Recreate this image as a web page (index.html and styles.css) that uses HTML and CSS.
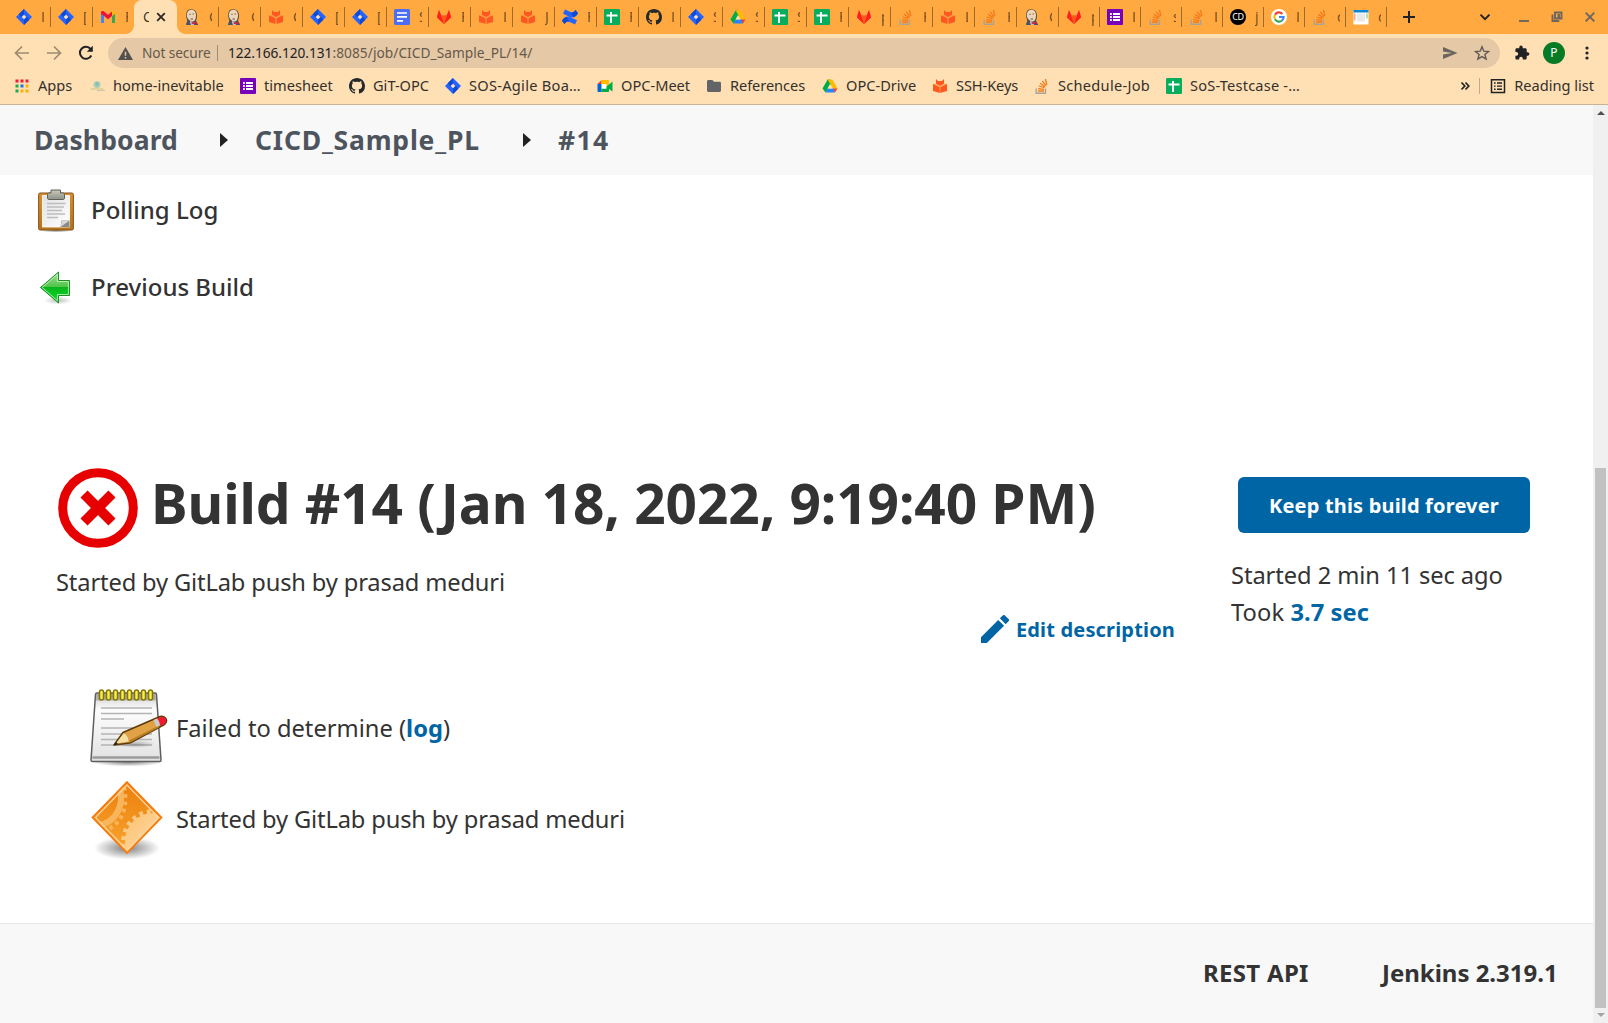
FILE: index.html
```html
<!DOCTYPE html>
<html lang="en">
<head>
<meta charset="utf-8">
<title>CICD_Sample_PL #14 [Jenkins]</title>
<link rel="stylesheet" href="styles.css">
</head>
<body>
<svg class="defs" aria-hidden="true">
  <defs>
    <linearGradient id="gPaper" x1="0" y1="0" x2="1" y2="1"><stop offset="0" stop-color="#e2e2e2"/><stop offset="1" stop-color="#fff"/></linearGradient>
    <linearGradient id="gPad" x1="0" y1="0" x2="0" y2="1"><stop offset="0" stop-color="#cfcfcf"/><stop offset=".25" stop-color="#fdfdfd"/><stop offset="1" stop-color="#e2e2e2"/></linearGradient>
    <linearGradient id="gBoard" x1="0" y1="0" x2="0" y2="1"><stop offset="0" stop-color="#d68f34"/><stop offset="1" stop-color="#b5741d"/></linearGradient>
    <linearGradient id="gClip" x1="0" y1="0" x2="0" y2="1"><stop offset="0" stop-color="#c8cabe"/><stop offset="1" stop-color="#8d9085"/></linearGradient>
    <linearGradient id="gGreen" x1="0" y1="0" x2="0" y2="1"><stop offset="0" stop-color="#a5e09a"/><stop offset=".48" stop-color="#4fc44a"/><stop offset=".5" stop-color="#08b61c"/><stop offset="1" stop-color="#0ae02c"/></linearGradient>
    <linearGradient id="gOrange" x1="0" y1="0" x2="0" y2="1"><stop offset="0" stop-color="#ec7f0c"/><stop offset="1" stop-color="#f9a530"/></linearGradient>
    <linearGradient id="gGear" x1="0" y1="0" x2="1" y2="1"><stop offset="0" stop-color="#fbbf70"/><stop offset=".6" stop-color="#ffdca4"/></linearGradient>
    <radialGradient id="gShadow"><stop offset="0" stop-color="#000" stop-opacity=".5"/><stop offset=".6" stop-color="#000" stop-opacity=".2"/><stop offset="1" stop-color="#000" stop-opacity="0"/></radialGradient>
  </defs>
  <symbol id="jira" viewBox="0 0 16 16"><path fill="#2563ff" d="M8 0l8 8-8 8-8-8z"/><path fill="#0f4bd0" d="M8 0v5.5L5.2 8.2 2.7 5.3zM8 16v-5.5l2.800-2.700 2.500 2.900z"/><path fill="#ffe0b5" d="M8 5.700L10.300 8 8 10.300 5.700 8z"/></symbol>
  <symbol id="gmail" viewBox="0 0 16 16"><path fill="#4285f4" d="M1 14V4l3 2.500V14z"/><path fill="#34a853" d="M12 14V6.500L15 4v10z"/><path fill="#ea1436" d="M1 3.500C1 2 2.800 1.600 4 2.500L8 5.800l4-3.300V7L8 10.200 4 7 1 4.800z"/><path fill="#fbbc04" d="M12 2.500c1.200-.9 3-.5 3 1v1.300L12 7z"/></symbol>
  <symbol id="jenkins" viewBox="0 0 16 16"><path fill="#5a4a40" d="M4.200.8C6.500-.4 11.500-.3 12.600 4c.7 3 .3 6-.8 8l1.500 3H2.500l.8-4C1.700 8.500 1.700 2.600 4.200.8z"/><path fill="#f0d6b7" d="M4.800 1.500C7.300.2 11 .8 11.800 4.400c.6 3-.2 7.700-2.800 8C5.500 12.500 3 9.500 2.900 6.200c-.1-1.700.6-3.900 1.900-4.700z"/><path fill="#d9d5cf" d="M3 4.500L4.500 5v4L3.300 8zM4.800 9.200c1.700-.9 3.500-.9 5-.3L9 10.500H5.800z"/><path fill="#3f5870" d="M1.800 16l1.700-3.700L8 13l4-1.200L14.300 16z"/><path fill="#f6f6f6" d="M6 12.300l3 .7.700 3H7z"/><path fill="#d3233a" d="M7.500 12.700l2.300 1 2.700-1v3l-2.700-1-2.300 1z"/><path stroke="#4a3a30" stroke-width=".8" fill="none" d="M5.300 5.300h1.400M8.500 5h1.400M6.500 10h2.500"/></symbol>
  <symbol id="gitbook" viewBox="0 0 16 16"><path fill="#ff5722" d="M4 1l2 2h4l2-2v4.800L8 8 4 5.800zM1 6l2.500.3L8 8.800l4.500-2.500L15 6v7l-7 2-7-2z"/><path stroke="#ffab45" stroke-width=".9" d="M8 9V15M1 5.700l7 3.300 7-3.300" fill="none"/></symbol>
  <symbol id="docs" viewBox="0 0 16 16"><rect width="16" height="16" rx="1.500" fill="#4c6ef5"/><path stroke="#fff" stroke-width="1.700" d="M3 4h10M3 7.900h10M3 11.800h6"/></symbol>
  <symbol id="gitlab" viewBox="0 0 16 16"><path fill="#fc6d26" d="M1 7L3 1l2.300 5.500h5.400L13 1l2 6-.5 2L8 15 1.500 9z"/><path fill="#ff1f1f" d="M1.500 6.500L3 1l2.300 5.500L8 15 1 8.500zM14.500 6.500L13 1l-2.300 5.500L8 15l7-6.500z"/><path fill="#fc5a16" d="M5 6.500h6L8 15z"/></symbol>
  <symbol id="confluence" viewBox="0 0 16 16"><path fill="#2563ff" d="M0 11.800C3 6.800 6 6.800 10 9l5 2.300-2 4.200c-6-2.800-8-4-10.500-.5zM16 4.200C13 9.200 10 9.200 6 7L1 4.700 3 .5c6 2.800 8 4 10.500.5z"/><path fill="#0f4bd0" d="M0 11.800c1.500-2.500 3-3.700 4.800-3.900L7 12c-2 .2-3.200 1.200-4.500 3zM16 4.200c-1.500 2.500-3 3.700-4.800 3.900L9 4c2-.2 3.200-1.200 4.500-3z"/></symbol>
  <symbol id="sheets" viewBox="0 0 16 16"><rect width="16" height="16" rx="1.200" fill="#06ad5c"/><path stroke="#fff" stroke-width="1.900" d="M2.500 6.500h11M7 3v11"/></symbol>
  <symbol id="github" viewBox="0 0 16 16"><path fill="#24292e" fill-rule="evenodd" d="M8 0C3.580 0 0 3.580 0 8c0 3.540 2.290 6.530 5.470 7.590.4.070.55-.17.55-.38 0-.19-.01-.82-.01-1.490-2.010.37-2.530-.49-2.690-.94-.09-.23-.48-.94-.82-1.130-.28-.15-.68-.52-.01-.53.63-.01 1.080.58 1.230.82.72 1.210 1.870.87 2.330.66.07-.52.28-.87.51-1.070-1.780-.2-3.640-.89-3.640-3.950 0-.87.31-1.590.82-2.150-.08-.2-.36-1.020.08-2.120 0 0 .67-.21 2.200.82.64-.18 1.320-.27 2-.27s1.360.09 2 .27c1.530-1.040 2.200-.82 2.200-.82.44 1.100.16 1.920.08 2.120.51.56.82 1.270.82 2.150 0 3.070-1.870 3.750-3.650 3.950.29.25.54.73.54 1.480 0 1.070-.01 1.930-.01 2.200 0 .21.15.46.55.38A8.010 8.010 0 0 0 16 8c0-4.420-3.580-8-8-8z"/></symbol>
  <symbol id="drive" viewBox="0 0 16 16"><path fill="#00ac47" d="M5.600 1.500H8l2 3.200L3.500 14.500.5 10.500z"/><path fill="#ffba00" d="M5.600 1.500h4.800l5.100 9H11z"/><path fill="#2684fc" d="M3.500 14.500l2.300-4h6.200l1 4z"/><path fill="#ea4335" d="M11 10.500h4.500L13 14.500z"/><path fill="#ffe0b5" d="M8 6l2.600 4.500H5.400z"/></symbol>
  <symbol id="so" viewBox="0 0 16 16"><path fill="none" stroke="#a9a296" stroke-width="1.400" d="M2.200 10.500v4.800h9.300v-4.800"/><path stroke="#f47a18" stroke-width="1.300" d="M4 13h6M4.100 10.600l6 .7M4.700 8l5.800 1.700M6 5.300l5.100 3.300M8.300 2.800l3.700 4.800M11.400 1l1.500 5.800"/></symbol>
  <symbol id="forms" viewBox="0 0 16 16"><rect width="16" height="16" rx="1" fill="#7700bb"/><path stroke="#fff" stroke-width="2" d="M3 5h1.800M6 5h7M3 8h1.800M6 8h7M3 11h1.800M6 11h7"/></symbol>
  <symbol id="google" viewBox="0 0 16 16"><circle cx="8" cy="8" r="8" fill="#fff"/><g fill="none" stroke-width="2.200"><path stroke="#ea4335" d="M4 5.700A4.600 4.600 0 0 1 11.400 4.900"/><path stroke="#fbbc05" d="M4 5.700a4.600 4.600 0 0 0 0 4.600"/><path stroke="#34a853" d="M4 10.300a4.600 4.600 0 0 0 7 1.200"/><path stroke="#4285f4" d="M8 8h4.600a4.600 4.600 0 0 1-1.600 3.500"/></g></symbol>
  <symbol id="sheet2" viewBox="0 0 16 16"><path fill="#fff" d="M.5 1h15v14.500H.5z"/><path fill="#0d86d8" d="M.5 1h15v2.500H.5z"/><path fill="#e8e8e8" d="M4 4.500h8v8H4z"/><path fill="#ffa48a" d="M1 4.500h1.500v7H1z"/><path fill="#8fdc9f" d="M13.200 4.500h1.500v5h-1.500z"/></symbol>
  <symbol id="meet" viewBox="0 0 16 16"><path fill="#fff" d="M4 5.500h6v6H4z"/><path fill="#ea4335" d="M.5 6L4.500 2v4z"/><path fill="#ffba00" d="M4.500 2H11c.7 0 1 .4 1 1v3.500L9.500 9V6h-5z"/><path fill="#0066da" d="M.5 6h4v8H1.700C.9 14 .5 13.600.5 13z"/><path fill="#00ac47" d="M4.500 10.700h5V8.500L15.500 3.500v10L12 11v2c0 .7-.4 1-1 1H4.500z"/></symbol>
  <symbol id="folder" viewBox="0 0 16 16"><path fill="#626468" d="M1 3.500C1 2.700 1.600 2 2.400 2h4L8 3.800h5.600c.8 0 1.400.6 1.400 1.400v7.400c0 .8-.6 1.400-1.400 1.400H2.400C1.600 14 1 13.400 1 12.600z"/></symbol>
  <symbol id="apps" viewBox="0 0 16 16"><path fill="#ea1f36" d="M1.500 1.500h3v3h-3zM6.500 1.500h3v3h-3zM11.500 1.500h3v3h-3z"/><path fill="#1aab4f" d="M1.500 6.500h3v3h-3zM1.500 11.500h3v3h-3z"/><path fill="#1a73e8" d="M6.500 6.500h3v3h-3z"/><path fill="#fbb006" d="M11.500 6.500h3v3h-3zM6.500 11.500h3v3h-3zM11.500 11.500h3v3h-3z"/></symbol>
  <symbol id="inev" viewBox="0 0 16 16"><circle cx="8" cy="6.500" r="3.500" fill="#a9cfae"/><circle cx="8" cy="6" r="1.600" fill="#86b3c4"/><path stroke="#d5ca8e" stroke-width="1.300" d="M1.500 11h13"/><path stroke="#c9c6b2" stroke-width="1" d="M8 12.500h8"/></symbol>
</svg>

<header class="tabstrip">
  <div class="tab"><svg class="ic"><use href="#jira"/></svg><span>I</span></div>
  <div class="tab"><svg class="ic"><use href="#jira"/></svg><span>[</span></div>
  <div class="tab plain"><svg class="ic"><use href="#gmail"/></svg><span>F</span></div>
  <div class="tab active"><span>C</span><svg class="x" viewBox="0 0 10 10"><path d="M1.200 1.200l7.600 7.600M8.800 1.200L1.200 8.800"/></svg></div>
  <div class="tab"><svg class="ic"><use href="#jenkins"/></svg><span>C</span></div>
  <div class="tab"><svg class="ic"><use href="#jenkins"/></svg><span>C</span></div>
  <div class="tab"><svg class="ic"><use href="#gitbook"/></svg><span>C</span></div>
  <div class="tab"><svg class="ic"><use href="#jira"/></svg><span>[</span></div>
  <div class="tab"><svg class="ic"><use href="#jira"/></svg><span>[</span></div>
  <div class="tab"><svg class="ic"><use href="#docs"/></svg><span>S</span></div>
  <div class="tab"><svg class="ic"><use href="#gitlab"/></svg><span>F</span></div>
  <div class="tab"><svg class="ic"><use href="#gitbook"/></svg><span>I</span></div>
  <div class="tab"><svg class="ic"><use href="#gitbook"/></svg><span>J</span></div>
  <div class="tab"><svg class="ic"><use href="#confluence"/></svg><span>F</span></div>
  <div class="tab"><svg class="ic"><use href="#sheets"/></svg><span>F</span></div>
  <div class="tab"><svg class="ic"><use href="#github"/></svg><span>I</span></div>
  <div class="tab"><svg class="ic"><use href="#jira"/></svg><span>S</span></div>
  <div class="tab"><svg class="ic"><use href="#drive"/></svg><span>S</span></div>
  <div class="tab"><svg class="ic"><use href="#sheets"/></svg><span>S</span></div>
  <div class="tab"><svg class="ic"><use href="#sheets"/></svg><span>F</span></div>
  <div class="tab"><svg class="ic"><use href="#gitlab"/></svg><span>p</span></div>
  <div class="tab"><svg class="ic"><use href="#so"/></svg><span>H</span></div>
  <div class="tab"><svg class="ic"><use href="#gitbook"/></svg><span>L</span></div>
  <div class="tab"><svg class="ic"><use href="#so"/></svg><span>H</span></div>
  <div class="tab"><svg class="ic"><use href="#jenkins"/></svg><span>C</span></div>
  <div class="tab slim"><svg class="ic"><use href="#gitlab"/></svg><span>p</span></div>
  <div class="tab slim"><svg class="ic"><use href="#forms"/></svg><span>I</span></div>
  <div class="tab slim"><svg class="ic"><use href="#so"/></svg><span>s</span></div>
  <div class="tab slim"><svg class="ic"><use href="#so"/></svg><span>I</span></div>
  <div class="tab slim"><b class="cd">CD</b><span>j</span></div>
  <div class="tab slim"><svg class="ic"><use href="#google"/></svg><span>I</span></div>
  <div class="tab slim"><svg class="ic"><use href="#so"/></svg><span>c</span></div>
  <div class="tab slim"><svg class="ic"><use href="#sheet2"/></svg><span>c</span></div>
  <svg class="newtab" viewBox="0 0 12 12"><path d="M6 0v12M0 6h12"/></svg>
  <div class="winbtns">
    <svg class="dark" viewBox="0 0 12 12"><path d="M1.500 3.700L6 8.200l4.500-4.500"/></svg>
    <svg viewBox="0 0 12 12"><path d="M1 10h10"/></svg>
    <svg viewBox="0 0 12 12"><path d="M4 1.500h6.500v6H4zM6.500 4h1.500v1.500H6.500M1.500 3.500V10h6.700"/></svg>
    <svg viewBox="0 0 12 12"><path d="M1.700 1.700l8.600 8.600M10.300 1.700l-8.600 8.600"/></svg>
  </div>
</header>

<div class="toolbar">
  <svg class="nav dim" viewBox="0 0 16 16"><path d="M15 8H2M8 1.500L1.500 8 8 14.500"/></svg>
  <svg class="nav dim" viewBox="0 0 16 16"><path d="M1 8h13M8 1.500L14.500 8 8 14.500"/></svg>
  <svg class="nav" viewBox="0 0 16 16"><path d="M13.300 10.500A6 6 0 1 1 12.600 4"/><path class="fill" d="M14.800.8v6h-6z"/></svg>
  <div class="omnibox">
    <svg class="warn" viewBox="0 0 16 16"><path fill="#53514e" d="M8 1l8 14H0z"/><path stroke="#e5c8a5" stroke-width="1.600" d="M8 6v4.500M8 11.700v1.600"/></svg>
    <span class="secure">Not secure</span>
    <span class="host">122.166.120.131</span><span class="path">:8085/job/CICD_Sample_PL/14/</span>
    <svg class="send" viewBox="0 0 16 16"><path fill="#6a655f" d="M1 2l14.500 6L1 14V9.500L10 8 1 6.500z"/></svg>
    <svg class="star" viewBox="0 0 16 16"><path fill="none" stroke="#5f5a55" stroke-width="1.400" d="M8 1.800l1.800 4.400 4.700.3-3.600 3 1.200 4.600L8 11.600l-4.100 2.500 1.200-4.600-3.600-3 4.700-.3z"/></svg>
  </div>
  <svg class="ext" viewBox="0 0 16 16"><path fill="#202124" d="M13.700 7.300h-1V4.600c0-.7-.6-1.300-1.300-1.300H8.700v-1a1.700 1.700 0 0 0-3.400 0v1H2.700c-.7 0-1.300.6-1.300 1.300v2.500h1a1.800 1.800 0 0 1 0 3.600h-1v2.600c0 .7.600 1.300 1.300 1.300h2.500v-1a1.800 1.800 0 0 1 3.600 0v1h2.600c.7 0 1.300-.6 1.300-1.300v-2.600h1a1.700 1.700 0 0 0 0-3.400z"/></svg>
  <span class="avatar">P</span>
  <svg class="more" viewBox="0 0 4 16"><circle cx="2" cy="3" r="1.600"/><circle cx="2" cy="8" r="1.600"/><circle cx="2" cy="13" r="1.600"/></svg>
</div>

<nav class="bookmarks">
  <a><svg class="ic"><use href="#apps"/></svg><span class="b1">Apps</span></a>
  <a><svg class="ic"><use href="#inev"/></svg><span class="b2">home-inevitable</span></a>
  <a><svg class="ic"><use href="#forms"/></svg><span class="b3">timesheet</span></a>
  <a><svg class="ic"><use href="#github"/></svg><span class="b4">GiT-OPC</span></a>
  <a><svg class="ic"><use href="#jira"/></svg><span class="b5">SOS-Agile Boa…</span></a>
  <a><svg class="ic"><use href="#meet"/></svg><span class="b6">OPC-Meet</span></a>
  <a><svg class="ic"><use href="#folder"/></svg><span class="b7">References</span></a>
  <a><svg class="ic"><use href="#drive"/></svg><span class="b8">OPC-Drive</span></a>
  <a><svg class="ic"><use href="#gitbook"/></svg><span class="b9">SSH-Keys</span></a>
  <a><svg class="ic"><use href="#so"/></svg><span class="b10">Schedule-Job</span></a>
  <a><svg class="ic"><use href="#sheets"/></svg><span class="b11">SoS-Testcase -…</span></a>
  <svg class="chev" viewBox="0 0 10 10"><path d="M1.500 1.500L4.800 5 1.500 8.500M5.500 1.500L8.800 5 5.500 8.500"/></svg>
  <a class="reading"><svg class="list" viewBox="0 0 16 16"><path fill="none" stroke="#202124" stroke-width="1.500" d="M1.500 1.800h13v12.700h-13z"/><path stroke="#202124" stroke-width="1.400" d="M4 5h1.600M7 5h5M4 8.100h1.600M7 8.100h5M4 11.200h1.600M7 11.200h5"/></svg><span>Reading list</span></a>
</nav>

<div class="viewport">
  <main class="page">
    <div class="crumbs">
      <a class="c1">Dashboard</a><i></i><a class="c2">CICD_Sample_PL</a><i></i><a class="c3">#14</a>
    </div>
    <ul class="tasks">
      <li>
        <svg class="clip" viewBox="0 0 36 44"><ellipse cx="18" cy="41.500" rx="16" ry="2" fill="url(#gShadow)"/><rect x=".6" y="4" width="34.800" height="37" rx="1.500" fill="url(#gBoard)" stroke="#875313"/><path fill="url(#gPaper)" stroke="#fff" stroke-width=".8" d="M4.500 6.500h27V38h-27z"/><path stroke="#bdbdbd" stroke-width="1.500" d="M9 14.500h18.500M9 18h17M9 21.500h15M9 25h18M9 28.500h11"/><path fill="#8a8a8a" d="M22.500 38l1-6.500h8V38z"/><path fill="#d8d8d8" d="M31.500 31.500L22.500 38l1.500-6.500z"/><path fill="url(#gClip)" stroke="#5f6159" d="M13 1h9.500v3H25c1 0 1.500.5 1.500 1.500V9c0 1-.5 1.500-1.500 1.500H11c-1 0-1.500-.5-1.500-1.500V5.500C9.500 4.500 10 4 11 4h2z"/></svg>
        <span>Polling Log</span>
      </li>
      <li>
        <svg class="prev" viewBox="0 0 36 36"><ellipse cx="20" cy="30.500" rx="14" ry="4" fill="url(#gShadow)" opacity=".5"/><path fill="url(#gGreen)" stroke="#1e8f26" d="M2.500 17.500L20.500 2v8.500h11v15h-11V33z"/><path fill="none" stroke="#c9f3c4" stroke-width=".8" d="M4.300 17.500L19.400 4.300v7.200h11v13h-11v6.200z"/></svg>
        <span>Previous Build</span>
      </li>
    </ul>
    <div class="build">
      <section class="left">
        <h1><svg viewBox="0 0 80 80"><circle cx="40" cy="40" r="35.300" fill="none" stroke="#e60000" stroke-width="9"/><path stroke="#e60000" stroke-width="10" d="M26 26l28 28M54 26L26 54"/></svg><span>Build #14 (Jan 18, 2022, 9:19:40 PM)</span></h1>
        <p class="desc">Started by GitLab push by prasad meduri</p>
        <a class="edit"><svg viewBox="3 3 18 18"><path fill="#0065a5" d="M3 17.250V21h3.750L17.810 9.940l-3.750-3.750L3 17.250zM20.710 7.040a.996.996 0 0 0 0-1.410l-2.340-2.340a.996.996 0 0 0-1.410 0l-1.830 1.830 3.750 3.750 1.830-1.830z"/></svg><span>Edit description</span></a>
        <div class="row">
          <svg class="note" viewBox="0 0 78 78"><ellipse cx="38" cy="73" rx="36" ry="4.500" fill="url(#gShadow)"/><path fill="url(#gPad)" stroke="#5e5e5e" stroke-width="1.500" stroke-linejoin="round" d="M5.500 5.500Q5.500 4 7 4h58q1.500 0 1.500 1.500L71 71q0 1.500-1.500 1.500h-67Q1 72.500 1 71z"/><path fill="#9a9a9a" d="M6.500 5h59l.3 6.500H6.200z" opacity=".75"/><path stroke="#9b9b9b" stroke-width="2.600" d="M2.500 68.500h67"/><path stroke="#b4b4b4" stroke-width="1.600" d="M11 19h51M11 24.500h51M11 30h23M11 39h51M11 45h51M11 50.500h51M11 56h51"/><g fill="#f7ee4e" stroke="#857600" stroke-width="1.500"><rect x="9.500" y="1" width="4" height="10" rx="2"/><rect x="16.500" y="1" width="4" height="10" rx="2"/><rect x="23.500" y="1" width="4" height="10" rx="2"/><rect x="30.500" y="1" width="4" height="10" rx="2"/><rect x="37.500" y="1" width="4" height="10" rx="2"/><rect x="44.500" y="1" width="4" height="10" rx="2"/><rect x="51.500" y="1" width="4" height="10" rx="2"/><rect x="58.500" y="1" width="4" height="10" rx="2"/></g><ellipse cx="45" cy="55" rx="20" ry="4" fill="url(#gShadow)" opacity=".5"/><path fill="#e0a244" stroke="#5e3b08" stroke-width="1.500" stroke-linejoin="round" d="M24 56l9-12.500L70 27.500c5-1.500 9 4 4.500 8L40 54z"/><path fill="#f3dfa2" d="M26 54.500l7.500-10c3 1 5 4 5 8z"/><path fill="#ba7d25" d="M39 51.500l29-14.500 1 1.500L40 53.500z"/><path fill="#c9cccb" d="M63.500 31l3.500-1.500c2 2 3 4 3 6.500L66.500 38z"/><path fill="#f01832" d="M67 29.500l3.500-1.300c4.500-1.300 7.700 3.500 4 6.500L70 37c0-3-1-5.500-3-7.500z"/><path fill="#222" d="M23.500 56.500L26 53l2 2z"/></svg>
          <span class="cause1">Failed to determine (<a>log</a>)</span>
        </div>
        <div class="row row2">
          <svg class="diamond" viewBox="0 0 78 80"><ellipse cx="37" cy="69" rx="33" ry="11.500" fill="url(#gShadow)"/><clipPath id="dc"><path d="M37 4l33 34.500L37 73 4 38.500z"/></clipPath><path fill="url(#gOrange)" d="M37 3l34.500 35.500L37 74 2 38.500z"/><g clip-path="url(#dc)" fill="none"><path stroke="#f9b55c" stroke-width="6" d="M29 6c6 18-1 38-23 41"/><path stroke="#f9b55c" stroke-width="4" stroke-dasharray="3.500 3.800" d="M34 8c5 21-3 42-26 45"/><circle cx="63" cy="62" r="28" fill="url(#gGear)"/><circle cx="63" cy="62" r="29.500" stroke="#fdca85" stroke-width="4.500" stroke-dasharray="3.800 4"/></g><path fill="none" stroke="#ffd39a" stroke-width="1.300" d="M37 6l31.500 32.500L37 71 5.500 38.500z"/><path fill="none" stroke="#f97a0c" stroke-width="1.700" d="M37 3l34.500 35.500L37 74 2.500 38.500z"/></svg>
          <span class="cause2">Started by GitLab push by prasad meduri</span>
        </div>
      </section>
      <aside class="right">
        <button>Keep this build forever</button>
        <p class="ago">Started 2 min 11 sec ago</p>
        <p class="took">Took <a>3.7 sec</a></p>
      </aside>
    </div>
    <footer><a class="api">REST API</a><a class="ver">Jenkins 2.319.1</a></footer>
  </main>
  <div class="scroll"><i class="up"></i><div class="thumb"></div><i class="down"></i></div>
</div>
</body>
</html>
```

FILE: styles.css
```css
* { box-sizing: border-box; margin: 0; padding: 0; }
body {
  width: 1608px; height: 1023px; overflow: hidden;
  display: flex; flex-direction: column;
  font-family: "Noto Sans", "Open Sans", sans-serif;
  color: #333; background: #fff;
}
svg { flex: none; display: block; }
.defs { position: absolute; width: 0; height: 0; }
.ic { width: 16px; height: 16px; }

/* tab strip */
.tabstrip { height: 34px; background: #ffa940; display: flex; align-items: stretch; padding-left: 9px; flex: none; }
.tab { width: 42px; display: flex; align-items: center; padding: 0 0 0 7px; position: relative; }
.tab::after { content: ""; position: absolute; right: 0; top: 7px; width: 1px; height: 20px; background: #9c6b31; }
.tab.slim { width: 41px; }
.tab > span { width: 3px; margin-left: 9px; overflow: hidden; white-space: nowrap; font: 14px/20px "Open Sans", "Noto Sans", sans-serif; color: #6b4a20; }
.tab.active { background: #ffe0b5; border-radius: 8px 8px 0 0; width: 43px; margin-left: -1px; padding-left: 9px; }
.tab.active > span { margin: 0; width: 6px; color: #3a3126; }
.tab.active::after, .tab.plain::after { display: none; }
.tab.active::before { content: ""; position: absolute; left: -8px; right: -8px; bottom: 0; height: 8px;
  background: radial-gradient(circle at 0 0, transparent 7.500px, #ffe0b5 8px) 0 0 / 8px 8px no-repeat,
              radial-gradient(circle at 100% 0, transparent 7.500px, #ffe0b5 8px) 100% 0 / 8px 8px no-repeat; }
.x { width: 10px; height: 10px; margin-left: 7px; fill: none; stroke: #2b2620; stroke-width: 1.800; }
.cd { width: 16px; height: 16px; border-radius: 50%; background: #000; color: #fff; font: 9px/16px "Noto Sans", sans-serif; text-align: center; letter-spacing: -.5px; }
.newtab { width: 12px; height: 12px; margin: 11px 0 0 16px; stroke: #202124; stroke-width: 2; }
.winbtns { margin: 0 12px 0 auto; display: flex; align-items: center; gap: 21px; }
.winbtns svg { width: 12px; height: 12px; fill: none; stroke: #6c665d; stroke-width: 1.900; }
.winbtns .dark { stroke: #202124; margin-right: 6px; }

/* toolbar */
.toolbar { height: 38px; background: #ffe0b5; display: flex; align-items: center; padding-left: 14px; flex: none; }
.nav { width: 16px; height: 16px; margin: 0 16px 0 0; fill: none; stroke: #202124; stroke-width: 2; }
.nav.dim { stroke: #9d8a70; stroke-width: 1.700; }
.nav .fill { fill: #202124; stroke: none; }
.omnibox { width: 1392px; height: 30px; margin: 0 14px 0 -2px; border-radius: 15px; background: #e5c8a5; display: flex; align-items: center; padding: 0 10px; font-size: 13.700px; line-height: 30px; color: #65594b; white-space: pre; }
.warn { width: 15px; height: 15px; margin-right: 9px; }
.secure { width: 76px; margin-right: 10px; letter-spacing: -.1px; position: relative; }
.secure::after { content: ""; position: absolute; right: 0; top: 7px; width: 1px; height: 16px; background: #a08c74; }
.host { color: #202124; width: 104.500px; letter-spacing: -.04px; }
.path { width: 200px; letter-spacing: .05px; }
.send { width: 16px; height: 16px; margin-left: auto; margin-right: 16px; }
.star { width: 16px; height: 16px; }
.ext { width: 16px; height: 16px; margin-right: 13px; }
.avatar { width: 22px; height: 22px; border-radius: 50%; background: #067a24; color: #fff; font-size: 12px; line-height: 22px; text-align: center; }
.more { width: 4px; height: 16px; margin-left: 20px; fill: #202124; }

/* bookmarks */
.bookmarks { height: 33px; background: #ffe0b5; border-bottom: 1px solid #c9b393; display: flex; align-items: center; gap: 16px; padding: 0 14px 4px 14px; font-size: 14.600px; color: #33302c; white-space: nowrap; flex: none; }
.bookmarks a { display: flex; align-items: center; gap: 8px; line-height: 20px; }
.bookmarks span { padding-bottom: 2px; }
.b1 { width: 35px; }
.b2 { width: 111px; }
.b3 { width: 69px; }
.b4 { width: 56px; }
.b5 { width: 112px; letter-spacing: .28px; }
.b6 { width: 69px; }
.b7 { width: 76px; letter-spacing: -.07px; }
.b8 { width: 70px; }
.b9 { width: 62px; letter-spacing: -.1px; }
.b10 { width: 92px; letter-spacing: .27px; }
.b11 { width: 110px; letter-spacing: .2px; }
.chev { width: 10px; height: 10px; margin-left: auto; margin-right: -7px; fill: none; stroke: #202124; stroke-width: 1.700; }
.reading { border-left: 1px solid #c0aa8a; padding-left: 10px; height: 16px; }
.list { width: 16px; height: 16px; }

/* page area */
.viewport { flex: 1; display: flex; min-height: 0; }
.page { width: 1593px; display: flex; flex-direction: column; }
.crumbs { height: 70px; background: #f8f8f8; display: flex; align-items: center; padding: 0 0 0 34px; font-size: 26.500px; font-weight: 700; color: #4d545d; }
.crumbs i { width: 0; height: 0; border: 7px solid transparent; border-left: 8px solid #222; border-right: 0; margin: 0 27px 0 42px; }
.c1 { width: 144px; letter-spacing: .1px; }
.c2 { width: 226px; letter-spacing: .8px; }
.c3 { letter-spacing: 1.300px; }

.tasks { list-style: none; padding-left: 38px; font-size: 24px; font-weight: 500; }
.tasks li { height: 70px; display: flex; align-items: center; gap: 17px; }
.tasks li + li { margin-top: 7px; }
.tasks svg { width: 36px; height: 44px; position: relative; top: 1px; }
.tasks .prev { height: 36px; }
.tasks li > span { padding-bottom: 1px; }

.build { display: flex; margin-top: 146px; padding-left: 56px; height: 455px; }
.left { width: 1119px; }
h1 { height: 80px; display: flex; gap: 13px; font-size: 55px; line-height: 69px; font-weight: 700; letter-spacing: -.08px; white-space: nowrap; margin-left: 2px; }
h1 svg { width: 80px; height: 80px; }
.desc { font-size: 23.700px; line-height: 67px; padding-top: 1px; margin-bottom: -1px; letter-spacing: -.15px; }
.edit { display: flex; align-items: center; justify-content: flex-end; gap: 7px; height: 28px; font-size: 20px; font-weight: 700; letter-spacing: .17px; color: #0065a5; }
.edit svg { width: 28px; height: 28px; }
.row { display: flex; align-items: center; height: 78px; margin: 46px 0 0 34px; font-size: 23.700px; white-space: pre; }
.row svg { width: 78px; height: 78px; margin-right: 8px; }
.row.row2 { height: 80px; margin-top: 12px; }
.row .diamond { height: 80px; }
.row a, .took a { font-weight: 700; color: #0065a5; }
.cause2 { letter-spacing: -.15px; }

.right { margin-left: 56px; padding-top: 9px; font-size: 23.700px; }
button { display: block; width: 292px; height: 56px; margin: 0 0 24px 7px; border: 0; border-radius: 6px; background: #0065a5; color: #fff; font: 700 20px "Noto Sans", sans-serif; letter-spacing: .17px; }
.right p { line-height: 37px; }
.ago { letter-spacing: -.08px; }
.took { letter-spacing: .08px; }

footer { margin-top: auto; height: 100px; background: #f8f8f8; border-top: 1px solid #eaeaea; display: flex; align-items: center; justify-content: flex-end; padding: 0 36px 2px 0; gap: 73px; font-size: 24px; font-weight: 700; }
.api { width: 106px; letter-spacing: .3px; }
.ver { width: 175px; letter-spacing: -.02px; }
.api, .ver { white-space: nowrap; }

.scroll { width: 15px; background: #f0f0f0; display: flex; flex-direction: column; align-items: center; }
.thumb { width: 11px; height: 540px; margin-top: auto; background: #c1c1c1; }
.up, .down { width: 0; height: 0; border: 4px solid transparent; }
.up { border-bottom-color: #505050; border-top: 0; margin-top: 6px; }
.down { border-top-color: #a3a3a3; border-bottom: 0; margin: 5px 0 6px; }
```
